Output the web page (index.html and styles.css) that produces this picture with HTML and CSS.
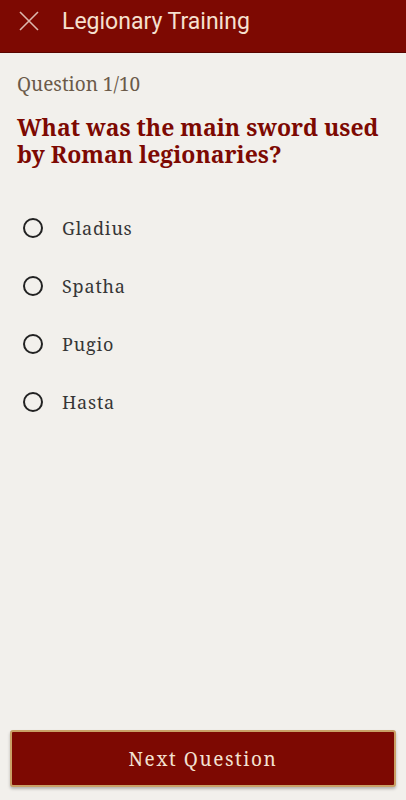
FILE: index.html
```html
<!DOCTYPE html>
<html>
<head>
<meta charset="utf-8">
<link rel="stylesheet" href="styles.css">
</head>
<body>
<div class="app">
  <header class="topbar">
    <svg class="close" width="20" height="20" viewBox="0 0 20 20"><path d="M1 1 L19 19 M19 1 L1 19" stroke="#dcb8ae" stroke-width="1.6" fill="none"/></svg>
    <span class="title">Legionary Training</span>
  </header>
  <main class="content">
    <div class="counter">Question 1/10</div>
    <h1 class="question">What was the main sword used by Roman legionaries?</h1>
    <ul class="options">
      <li class="option"><span class="radio"></span><span class="label">Gladius</span></li>
      <li class="option"><span class="radio"></span><span class="label">Spatha</span></li>
      <li class="option"><span class="radio"></span><span class="label">Pugio</span></li>
      <li class="option"><span class="radio"></span><span class="label">Hasta</span></li>
    </ul>
  </main>
  <footer class="footer">
    <button class="next">Next Question</button>
  </footer>
</div>
</body>
</html>
```
FILE: styles.css
```css
* { box-sizing: border-box; }
html, body { margin: 0; padding: 0; }
body { background: #f2f0ec; font-family: "Noto Serif", "DejaVu Serif", serif; }
.app { display: flex; flex-direction: column; height: 800px; }
.topbar { height: 53px; background: #7d0902; display: flex; align-items: center; padding: 0 0 10px 19px; border-bottom: 1px solid #5a0500; }
.close { flex: none; }
.title { font-family: Roboto, "Noto Sans", sans-serif; font-size: 23px; color: #f6e0cf; margin-left: 23px; }
.content { flex: 1; padding: 0 17px; }
.counter { margin-top: 19px; font-size: 19px; color: #6b5a49; line-height: 25px; }
.question { margin: 17px 0 0; font-size: 23px; font-weight: bold; color: #7d0902; line-height: 27px; }
.options { list-style: none; margin: 48px 0 0; padding: 0; display: flex; flex-direction: column; gap: 34px; }
.option { display: flex; align-items: center; height: 24px; }
.radio { width: 20px; height: 20px; border: 2px solid #222; border-radius: 50%; margin-left: 6px; flex: none; }
.label { margin-left: 19px; font-size: 18px; color: #363636; letter-spacing: 0.8px; }
.footer { padding: 0 10px 13px; }
.next { width: 100%; height: 57px; background: #7d0902; border: 2px solid #c9a066; border-radius: 3px; box-shadow: 0 2px 3px rgba(0,0,0,0.25); color: #f3e2d2; font-family: "Noto Serif", "DejaVu Serif", serif; font-size: 19px; letter-spacing: 1.6px; }
```
